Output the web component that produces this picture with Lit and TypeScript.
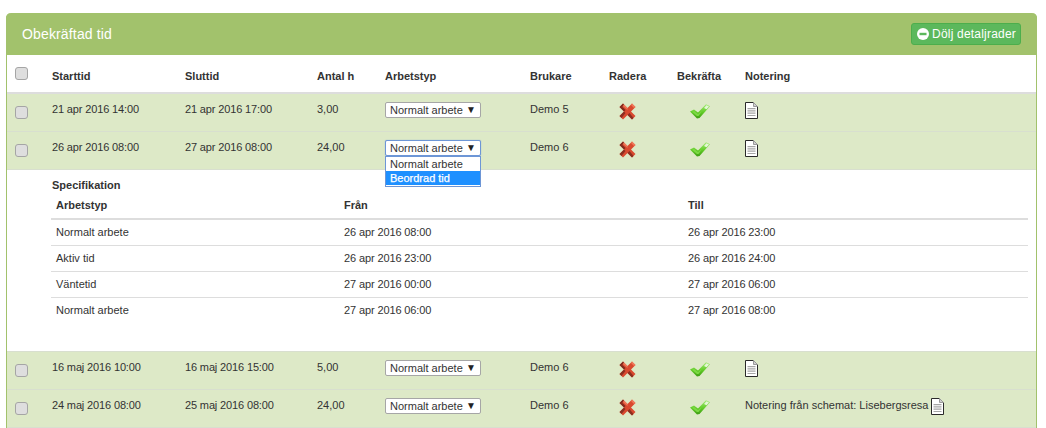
import { LitElement, html, css } from "lit";
import { customElement } from "lit/decorators.js";

const cross = html`<svg class="ico" width="17" height="17" viewBox="0 0 17 17">
  <path d="M4 0.5 L8.5 5 L13 0.5 L16.5 4 L12 8.5 L16.5 13 L13 16.5 L8.5 12 L4 16.5 L0.5 13 L5 8.5 L0.5 4 Z" fill="#d9492f"/>
  <path d="M0.5 13 L5 8.5 L6.5 10 L2.5 15 Z M8.5 12 L10.5 10 L14.5 15 L13 16.5 Z" fill="#8a2f21"/>
  <path d="M0.5 4 L4 0.5 L5 1.5 L2 5.5 Z M2 5.5 L5 8.5 L6.5 7 L3.5 4 Z" fill="#7f2b1f"/>
  <path d="M13 0.5 L16.5 4 L15 5 L12 2 Z M5 1.5 L8.5 5 L8.5 7 L4 3 Z" fill="#f0785a"/>
</svg>`;

const check = html`<svg class="ico" width="20" height="15" viewBox="0 0 20 15">
  <defs>
    <linearGradient id="g" x1="0" y1="0" x2="0" y2="1">
      <stop offset="0" stop-color="#a5ea76"/>
      <stop offset="0.55" stop-color="#62cc28"/>
      <stop offset="1" stop-color="#3d9c12"/>
    </linearGradient>
  </defs>
  <path d="M0 7.5 L4 5.5 L8 8.5 L16 0.3 L20 2.3 L9.5 14 L7 14.5 Z" fill="url(#g)"/>
  <path d="M14 4 L16.5 1.3 L19 2.6 L16.5 5.2 Z" fill="#e4f7d6"/>
  <path d="M2 7.8 L4 7 L8 10 L12 7 L8.5 12 L7 12 Z" fill="#7cd944"/>
</svg>`;

const doc = html`<svg class="ico" width="13" height="17" viewBox="0 0 13 17">
  <path d="M0.5 0.5 H8.5 L12.5 4.5 V16.5 H0.5 Z" fill="#fff" stroke="#2a2a2a"/>
  <path d="M8.5 0.5 V4.5 H12.5 Z" fill="#d0d0d0" stroke="#999"/>
  <path d="M2.5 6 H10.5 V7.2 H2.5 Z M2.5 8.3 H10.5 V9.5 H2.5 Z M2.5 10.6 H10.5 V11.8 H2.5 Z M2.5 12.9 H10.5 V14.1 H2.5 Z" fill="#a6a6a6"/>
</svg>`;

const rows = [
  { a: "21 apr 2016 14:00", b: "21 apr 2016 17:00", h: "3,00", u: "Demo 5", note: "" },
  { a: "26 apr 2016 08:00", b: "27 apr 2016 08:00", h: "24,00", u: "Demo 6", note: "", open: true },
  { a: "16 maj 2016 10:00", b: "16 maj 2016 15:00", h: "5,00", u: "Demo 6", note: "" },
  { a: "24 maj 2016 08:00", b: "25 maj 2016 08:00", h: "24,00", u: "Demo 6", note: "Notering från schemat: Lisebergsresa" },
];

const spec = [
  ["Normalt arbete", "26 apr 2016 08:00", "26 apr 2016 23:00"],
  ["Aktiv tid", "26 apr 2016 23:00", "26 apr 2016 24:00"],
  ["Väntetid", "27 apr 2016 00:00", "27 apr 2016 06:00"],
  ["Normalt arbete", "27 apr 2016 06:00", "27 apr 2016 08:00"],
];

@customElement("app-root")
export class AppRoot extends LitElement {
  static styles = css`
    :host {
      display: block;
      height: 428px;
      overflow: hidden;
      background: #fff;
      font-family: "Liberation Sans", Arial, sans-serif;
      font-size: 11px;
      color: #333;
    }
    .panel {
      margin: 13px 9px 0 6px;
      border: 1px solid #a2c26c;
      border-top: 0;
      border-bottom: 0;
      border-radius: 5px 5px 0 0;
    }
    .head {
      margin: 0 -1px;
      height: 42px;
      background: #a2c26c;
      border-radius: 5px 5px 0 0;
      display: flex;
      align-items: center;
      justify-content: space-between;
      padding: 0 16px 0 16px;
      color: #fff;
    }
    .title { font-size: 14px; letter-spacing: 0.15px; }
    .btn {
      display: flex;
      align-items: center;
      gap: 3px;
      height: 22px;
      box-sizing: border-box;
      padding: 0 4px 0 5px;
      background: #5cb85c;
      border: 1px solid #4cae4c;
      border-radius: 3px;
      font-size: 12px;
      letter-spacing: 0.2px;
      white-space: nowrap;
    }
    .row {
      display: grid;
      grid-template-columns: 45px 133px 132px 68px 145px 79px 68px 68px 1fr;
      height: 37px;
      border-bottom: 1px solid #d8dfcf;
      background: #dde9c7;
      box-sizing: content-box;
      line-height: 16px;
    }
    .row > div { padding-top: 7px; min-width: 0; }
    .row > .date { letter-spacing: -0.14px; }
    .row.top {
      background: #fff;
      border-bottom: 2px solid #ddd;
      font-weight: bold;
      color: #333;
    }
    .row.top > div { padding-top: 13px; }
    .row > .cb { padding: 12px 0 0 8px; }
    .row.top > .cb { padding: 12px 0 0 8px; }
    .box {
      display: block;
      width: 13px;
      height: 13px;
      border: 1px solid #a5a5a5;
      border-radius: 3px;
      background: #dedede;
      box-sizing: border-box;
    }
    .row > .sel { padding-top: 8px; position: relative; }
    .select {
      width: 96px;
      height: 16px;
      box-sizing: border-box;
      background: #fff;
      border: 1px solid #a6a6a6;
      border-radius: 2px;
      display: flex;
      justify-content: space-between;
      align-items: center;
      padding: 0 4px;
      line-height: 14px;
      color: #333;
    }
    .select.focus { border-color: #6d96d6; box-shadow: 0 0 1px #6d96d6; }
    .arrow { font-size: 10px; color: #222; }
    .menu {
      position: absolute;
      left: 0;
      top: 24px;
      width: 96px;
      box-sizing: border-box;
      height: 31px;
      background: #fff;
      border: 1px solid #6d96d6;
      z-index: 2;
      line-height: 14px;
    }
    .menu div { padding-left: 4px; height: 14px; }
    .menu .on { background: #1e90ff; color: #fff; -webkit-text-stroke: 0.25px #fff; }
    .row > .cross { padding: 9px 0 0 10px; }
    .row > .chk { padding: 10px 0 0 13px; }
    .row > .note { padding-top: 8px; display: flex; gap: 3px; white-space: nowrap; }
    .row > .note span { line-height: 14px; }
    .ico { display: block; flex: none; }
    .detail {
      height: 182px;
      background: #fff;
      padding: 7px 8px 0 44px;
      box-sizing: border-box;
      border-bottom: 1px solid #d8dfcf;
    }
    .spec { font-weight: bold; line-height: 16px; padding-left: 1px; }
    .sgrid {
      display: grid;
      grid-template-columns: 288px 344px 1fr;
      line-height: 14px;
    }
    .sgrid > div { padding-left: 5px; padding-top: 5px; box-sizing: border-box; border-bottom: 1px solid #ddd; }
    .sgrid > .th { font-weight: bold; border-bottom: 2px solid #ddd; height: 27px; }
    .sgrid > .td { height: 26px; }
    .sgrid > .num { letter-spacing: -0.12px; }
    .sgrid > .last { border-bottom: 0; }
  `;

  private renderRow(r: (typeof rows)[number]) {
    return html`<div class="row">
      <div class="cb"><span class="box"></span></div>
      <div class="date">${r.a}</div>
      <div class="date">${r.b}</div>
      <div>${r.h}</div>
      <div class="sel">
        <div class="select ${r.open ? "focus" : ""}"><span>Normalt arbete</span><span class="arrow">▼</span></div>
        ${r.open
          ? html`<div class="menu"><div>Normalt arbete</div><div class="on">Beordrad tid</div></div>`
          : ""}
      </div>
      <div>${r.u}</div>
      <div class="cross">${cross}</div>
      <div class="chk">${check}</div>
      <div class="note">${r.note ? html`<span>${r.note}</span>` : ""}${doc}</div>
    </div>`;
  }

  render() {
    return html`<div class="panel">
      <div class="head">
        <span class="title">Obekräftad tid</span>
        <span class="btn">
          <svg width="12" height="12" viewBox="0 0 12 12"><circle cx="6" cy="6" r="6" fill="#fff"/><rect x="2.5" y="4.8" width="7" height="2.4" fill="#5cb85c"/></svg>
          Dölj detaljrader
        </span>
      </div>
      <div class="row top">
        <div class="cb"><span class="box"></span></div>
        <div>Starttid</div><div>Sluttid</div><div>Antal h</div><div>Arbetstyp</div>
        <div>Brukare</div><div>Radera</div><div>Bekräfta</div><div>Notering</div>
      </div>
      ${this.renderRow(rows[0])}
      ${this.renderRow(rows[1])}
      <div class="detail">
        <div class="spec">Specifikation</div>
        <div class="sgrid">
          <div class="th">Arbetstyp</div><div class="th">Från</div><div class="th">Till</div>
          ${spec.map((s, i) =>
            s.map(
              (c, j) =>
                html`<div class="td ${j > 0 ? "num" : ""} ${i === spec.length - 1 ? "last" : ""}">${c}</div>`
            )
          )}
        </div>
      </div>
      ${this.renderRow(rows[2])}
      ${this.renderRow(rows[3])}
    </div>`;
  }
}
